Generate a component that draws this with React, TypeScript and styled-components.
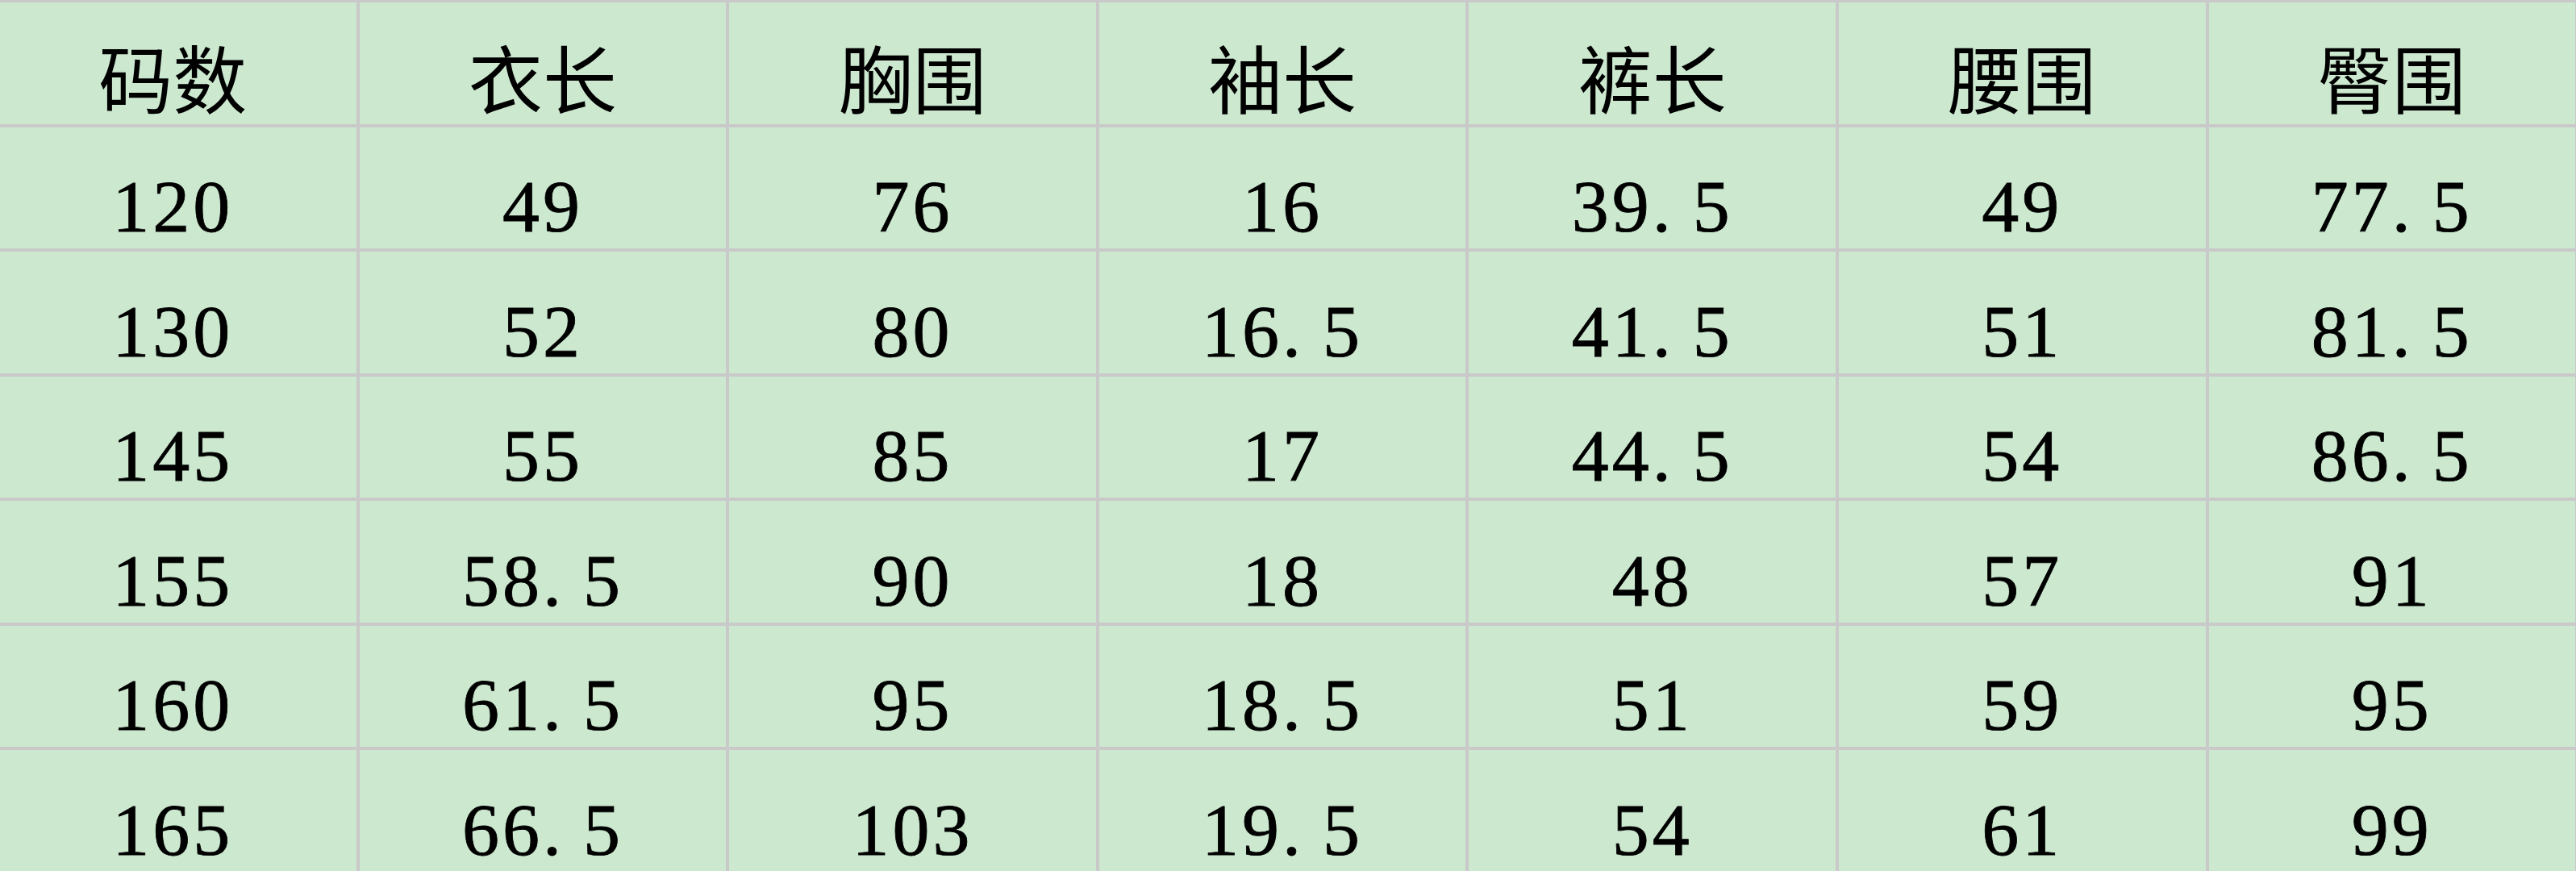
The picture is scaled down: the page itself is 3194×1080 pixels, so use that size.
import React from "react";
import styled, { createGlobalStyle } from "styled-components";

const eyeGreen = "#cce8cf";
const gridGrey = "#c9c9c9";

const GlobalStyle = createGlobalStyle`
  html, body {
    margin: 0;
    padding: 0;
    overflow: hidden;
    background: ${eyeGreen};
  }
`;

const Sheet = styled.div`
  display: grid;
  grid-template-columns: repeat(7, 458.6px);
  margin-left: -13px;
  border-top: 3px solid ${gridGrey};
  background: ${eyeGreen};
  color: #000;
  font-family: "Liberation Serif", "Noto Sans CJK SC", serif;
  font-size: 92px;
  line-height: 92px;
`;

const Cell = styled.div`
  display: flex;
  align-items: flex-end;
  justify-content: center;
  height: 150.5px;
  box-sizing: content-box;
  border-right: 4px solid ${gridGrey};
  border-bottom: 4px solid ${gridGrey};
  white-space: nowrap;
`;

const Label = styled.span`
  display: block;
  padding-bottom: 5px;
`;

const Num = styled.span`
  display: block;
  padding-bottom: 6px;
  letter-spacing: 4px;
  -webkit-text-stroke: 0.8px #000;
`;

const Dot = styled.span`
  display: inline-block;
  width: 50px;
  letter-spacing: 0;
`;

const headers = ["码数", "衣长", "胸围", "袖长", "裤长", "腰围", "臀围"];

const rows = [
  ["120", "49", "76", "16", "39.5", "49", "77.5"],
  ["130", "52", "80", "16.5", "41.5", "51", "81.5"],
  ["145", "55", "85", "17", "44.5", "54", "86.5"],
  ["155", "58.5", "90", "18", "48", "57", "91"],
  ["160", "61.5", "95", "18.5", "51", "59", "95"],
  ["165", "66.5", "103", "19.5", "54", "61", "99"],
];

const Value = ({ v }: { v: string }) => {
  const [whole, frac] = v.split(".");
  return (
    <Num>
      {whole}
      {frac !== undefined && (
        <>
          <Dot>.</Dot>
          {frac}
        </>
      )}
    </Num>
  );
};

export default function App() {
  return (
    <>
      <GlobalStyle />
      <Sheet>
        {headers.map((h) => (
          <Cell key={h}>
            <Label>{h}</Label>
          </Cell>
        ))}
        {rows.map((r, i) =>
          r.map((v, j) => (
            <Cell key={`${i}-${j}`}>
              <Value v={v} />
            </Cell>
          ))
        )}
      </Sheet>
    </>
  );
}
